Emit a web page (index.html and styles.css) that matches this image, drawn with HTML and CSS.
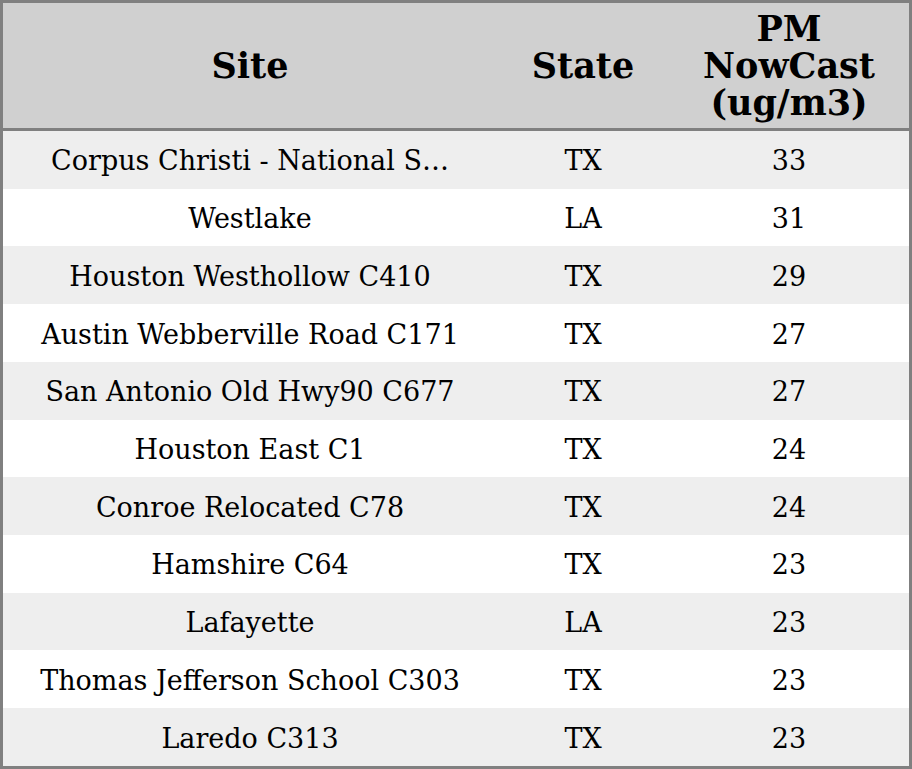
FILE: index.html
```html
<!DOCTYPE html>
<html>
<head>
<meta charset="utf-8">
<link rel="stylesheet" href="styles.css">
</head>
<body>
<table class="grid">
  <colgroup>
    <col class="c-site">
    <col class="c-state">
    <col class="c-pm">
  </colgroup>
  <thead>
    <tr>
      <th>Site</th>
      <th>State</th>
      <th>PM<br>NowCast<br>(ug/m3)</th>
    </tr>
  </thead>
  <tbody>
    <tr><td>Corpus Christi - National S…</td><td>TX</td><td>33</td></tr>
    <tr><td>Westlake</td><td>LA</td><td>31</td></tr>
    <tr><td>Houston Westhollow C410</td><td>TX</td><td>29</td></tr>
    <tr><td>Austin Webberville Road C171</td><td>TX</td><td>27</td></tr>
    <tr><td>San Antonio Old Hwy90 C677</td><td>TX</td><td>27</td></tr>
    <tr><td>Houston East C1</td><td>TX</td><td>24</td></tr>
    <tr><td>Conroe Relocated C78</td><td>TX</td><td>24</td></tr>
    <tr><td>Hamshire C64</td><td>TX</td><td>23</td></tr>
    <tr><td>Lafayette</td><td>LA</td><td>23</td></tr>
    <tr><td>Thomas Jefferson School C303</td><td>TX</td><td>23</td></tr>
    <tr><td>Laredo C313</td><td>TX</td><td>23</td></tr>
  </tbody>
</table>
</body>
</html>
```

FILE: styles.css
```css
html, body {
  margin: 0;
  padding: 0;
  background: #ffffff;
}
.grid {
  width: 912px;
  table-layout: fixed;
  border-collapse: separate;
  border-spacing: 0;
  border: 3px solid #808080;
  font-family: "DejaVu Serif", serif;
  color: #000;
}
.c-site { width: 494px; }
.c-state { width: 172px; }
.c-pm { width: 240px; }
.grid th {
  background: #d0d0d0;
  font-size: 35px;
  font-weight: bold;
  line-height: 37px;
  height: 128px;
  padding: 0;
  box-sizing: border-box;
  text-align: center;
  vertical-align: middle;
  border-bottom: 3px solid #808080;
}
.grid td {
  font-size: 27px;
  line-height: 30px;
  height: 57.73px;
  padding: 3px 0 0;
  box-sizing: border-box;
  text-align: center;
  vertical-align: middle;
  white-space: nowrap;
}
.grid tbody tr:nth-child(odd) td {
  background: #eeeeee;
}
```
